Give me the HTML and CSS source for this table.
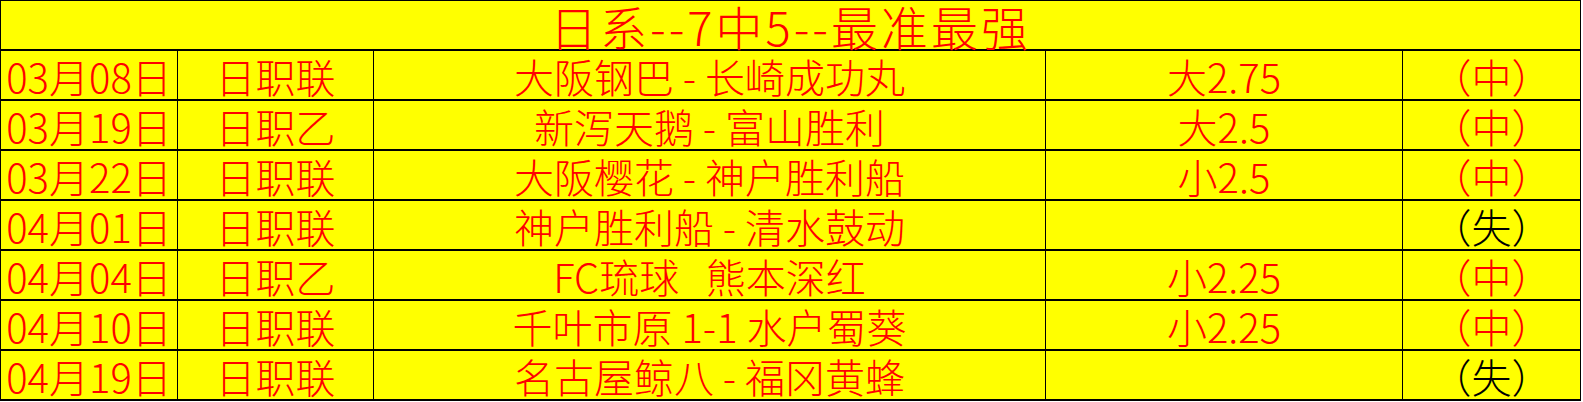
FILE: index.html
```html
<!DOCTYPE html>
<html lang="zh-CN">
<head>
<meta charset="utf-8">
<title>日系--7中5--最准最强</title>
<link rel="stylesheet" href="styles.css">
</head>
<body>
<div class="sheet">
  <div class="cell title">日系--7中5--最准最强</div>

  <div class="cell">03月08日</div>
  <div class="cell">日职联</div>
  <div class="cell">大阪钢巴 - 长崎成功丸</div>
  <div class="cell">大2.75</div>
  <div class="cell">（中）</div>

  <div class="cell">03月19日</div>
  <div class="cell">日职乙</div>
  <div class="cell">新泻天鹅 - 富山胜利</div>
  <div class="cell">大2.5</div>
  <div class="cell">（中）</div>

  <div class="cell">03月22日</div>
  <div class="cell">日职联</div>
  <div class="cell">大阪樱花 - 神户胜利船</div>
  <div class="cell">小2.5</div>
  <div class="cell">（中）</div>

  <div class="cell">04月01日</div>
  <div class="cell">日职联</div>
  <div class="cell">神户胜利船 - 清水鼓动</div>
  <div class="cell"></div>
  <div class="cell lose">（失）</div>

  <div class="cell">04月04日</div>
  <div class="cell">日职乙</div>
  <div class="cell keep">FC琉球   熊本深红</div>
  <div class="cell">小2.25</div>
  <div class="cell">（中）</div>

  <div class="cell">04月10日</div>
  <div class="cell">日职联</div>
  <div class="cell">千叶市原 1-1 水户蜀葵</div>
  <div class="cell">小2.25</div>
  <div class="cell">（中）</div>

  <div class="cell">04月19日</div>
  <div class="cell">日职联</div>
  <div class="cell">名古屋鲸八 - 福冈黄蜂</div>
  <div class="cell"></div>
  <div class="cell lose">（失）</div>
</div>
</body>
</html>
```
FILE: styles.css
```css
html, body {
  margin: 0;
  padding: 0;
  background: #ffffff;
}

.sheet {
  display: grid;
  grid-template-columns: 176px 195px 671px 356px 177px;
  grid-auto-rows: 48px;
  column-gap: 1px;
  row-gap: 2px;
  padding: 1px 1px 2px 1px;
  background: #000000;
  width: max-content;
}

.cell {
  background: #ffff00;
  color: #ff0000;
  font-family: "Noto Sans CJK SC", "Noto Sans", sans-serif;
  font-size: 40px;
  font-weight: 300;
  line-height: 1;
  display: flex;
  align-items: center;
  justify-content: center;
  padding-top: 2px;
  box-sizing: border-box;
  white-space: nowrap;
}

.title {
  grid-column: 1 / -1;
  font-size: 47px;
  letter-spacing: 3px;
  padding-top: 0;
}

.keep {
  white-space: pre;
}

.lose {
  color: #000000;
}
```
